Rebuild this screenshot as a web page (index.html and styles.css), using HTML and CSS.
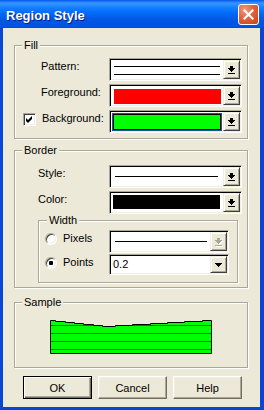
FILE: index.html
```html
<!DOCTYPE html>
<html lang="en">
<head>
  <meta charset="UTF-8">
  <title>Region Style</title>
  <link rel="stylesheet" href="styles.css">
</head>
<body>
  <div class="window">
    <div class="titlebar">
      <span class="title">Region Style</span>
      <button class="close" aria-label="Close">
        <svg width="11" height="11" viewBox="0 0 11 11"><path d="M1.5 1.5L9.5 9.5M9.5 1.5L1.5 9.5" stroke="#fff" stroke-width="2.2" stroke-linecap="square"/></svg>
      </button>
    </div>

    <div class="client">
      <div class="group fill">
        <span class="group-title">Fill</span>
        <div class="row">
          <span class="label">Pattern:</span>
          <div class="combo">
            <div class="combo-value"><div class="pattern-lines"></div></div>
            <span class="drop"><svg width="7" height="8" viewBox="0 0 7 8"><path d="M2 0h3v2h2v1h-1v1h-1v1h-1v1h-1v-1h-1v-1h-1v-1h-1v-1h2zM0 7h7v1H0z"/></svg></span>
          </div>
        </div>
        <div class="row">
          <span class="label">Foreground:</span>
          <div class="combo">
            <div class="combo-value"><div class="swatch red"></div></div>
            <span class="drop"><svg width="7" height="8" viewBox="0 0 7 8"><path d="M2 0h3v2h2v1h-1v1h-1v1h-1v1h-1v-1h-1v-1h-1v-1h-1v-1h2zM0 7h7v1H0z"/></svg></span>
          </div>
        </div>
        <div class="row">
          <span class="label check">
            <span class="checkbox"><svg width="7" height="7" viewBox="0 0 7 7"><polygon points="0,2 2,4 6,0 6,3 2,7 0,5"/></svg></span>
            <span>Background:</span>
          </span>
          <div class="combo">
            <div class="combo-value"><div class="swatch green focus"></div></div>
            <span class="drop"><svg width="7" height="8" viewBox="0 0 7 8"><path d="M2 0h3v2h2v1h-1v1h-1v1h-1v1h-1v-1h-1v-1h-1v-1h-1v-1h2zM0 7h7v1H0z"/></svg></span>
          </div>
        </div>
      </div>

      <div class="group border-group">
        <span class="group-title">Border</span>
        <div class="row">
          <span class="label">Style:</span>
          <div class="combo">
            <div class="combo-value"><div class="line"></div></div>
            <span class="drop"><svg width="7" height="8" viewBox="0 0 7 8"><path d="M2 0h3v2h2v1h-1v1h-1v1h-1v1h-1v-1h-1v-1h-1v-1h-1v-1h2zM0 7h7v1H0z"/></svg></span>
          </div>
        </div>
        <div class="row">
          <span class="label">Color:</span>
          <div class="combo">
            <div class="combo-value"><div class="swatch black"></div></div>
            <span class="drop"><svg width="7" height="8" viewBox="0 0 7 8"><path d="M2 0h3v2h2v1h-1v1h-1v1h-1v1h-1v-1h-1v-1h-1v-1h-1v-1h2zM0 7h7v1H0z"/></svg></span>
          </div>
        </div>

        <div class="group width-group">
          <span class="group-title">Width</span>
          <div class="row">
            <span class="label radio-label"><span class="radio"></span><span>Pixels</span></span>
            <div class="combo narrow">
              <div class="combo-value"><div class="line short"></div></div>
              <span class="drop disabled"><svg width="8" height="9" viewBox="0 0 8 9"><path fill="#fff" d="M3 1h3v2h2v1h-1v1h-1v1h-1v1h-1v-1h-1v-1h-1v-1h-1v-1h2zM1 8h7v1H1z"/><path fill="#aca899" d="M2 0h3v2h2v1h-1v1h-1v1h-1v1h-1v-1h-1v-1h-1v-1h-1v-1h2zM0 7h7v1H0z"/></svg></span>
            </div>
          </div>
          <div class="row points">
            <span class="label radio-label"><span class="radio checked"></span><span>Points</span></span>
            <div class="combo narrow short-combo">
              <div class="combo-value text-value">0.2</div>
              <span class="drop"><svg width="7" height="4" viewBox="0 0 7 4"><path d="M0 0h7v1h-1v1h-1v1h-1v1h-1v-1h-1v-1h-1v-1h-1z"/></svg></span>
            </div>
          </div>
        </div>
      </div>

      <div class="group sample">
        <span class="group-title">Sample</span>
        <svg width="162" height="34" viewBox="0 0 162 34">
          <defs>
            <pattern id="hatch" width="8" height="8" patternUnits="userSpaceOnUse">
              <rect width="8" height="8" fill="#00ff00"/>
              <rect y="5" width="8" height="1" fill="#ff0000"/>
            </pattern>
          </defs>
          <polygon fill="url(#hatch)" stroke="#000" points="0.5,0.5 5.5,0.5 5.5,1.5 15.5,1.5 15.5,2.5 24.5,2.5 24.5,3.5 33.5,3.5 33.5,4.5 43.5,4.5 43.5,5.5 52.5,5.5 52.5,6.5 65.5,6.5 65.5,5.5 82.5,5.5 82.5,4.5 100.5,4.5 100.5,3.5 117.5,3.5 117.5,2.5 134.5,2.5 134.5,1.5 152.5,1.5 152.5,0.5 161.5,0.5 161.5,33.5 0.5,33.5"/>
        </svg>
      </div>

      <div class="buttons">
        <button class="btn default">OK</button>
        <button class="btn">Cancel</button>
        <button class="btn">Help</button>
      </div>
    </div>
  </div>
</body>
</html>
```

FILE: styles.css
```css
html, body {
  margin: 0;
  padding: 0;
}
body {
  width: 264px;
  height: 410px;
  overflow: hidden;
  font-family: "Liberation Sans", Arial, sans-serif;
  font-size: 11px;
  color: #000;
}
.window {
  width: 264px;
  height: 410px;
  display: flex;
  flex-direction: column;
  background: #0846d8;
}
.titlebar {
  height: 28px;
  flex: none;
  display: flex;
  align-items: center;
  justify-content: space-between;
  padding: 0 5px 0 6px;
  background: linear-gradient(180deg, #0058ee 0, #3a93ff 3px, #288eff 5px, #127dff 8px, #036ffc 12px, #0262ee 16px, #0057e5 20px, #0054e3 24px, #0055eb 26px, #0048d8 28px);
}
.title {
  color: #fff;
  font-weight: bold;
  font-size: 13px;
  padding-top: 2px;
  text-shadow: 1px 1px 0 #0a1883;
}
.close {
  width: 21px;
  height: 21px;
  padding: 0;
  margin: 0;
  border: 1px solid #fff;
  border-radius: 3px;
  background: radial-gradient(circle at 30% 25%, #f29a7c 0, #e0623c 45%, #c8421a 100%);
  display: flex;
  align-items: center;
  justify-content: center;
}
.client {
  flex: 1;
  box-sizing: border-box;
  background: #ece9d8;
  border: solid #0846d8;
  border-width: 0 4px 3px 3px;
  padding: 17px 0 0 11px;
}

.group {
  position: relative;
  width: 234px;
  box-sizing: border-box;
  border: 1px solid #aca899;
  box-shadow: inset 1px 1px 0 #fff, 1px 1px 0 #fff;
}
.group-title {
  position: absolute;
  top: -7px;
  left: 7px;
  padding: 0 2px;
  line-height: 13px;
  background: #ece9d8;
}
.fill {
  padding: 12px 5px 5px 0;
}
.border-group {
  margin-top: 11px;
  padding: 14px 5px 4px 0;
}
.width-group {
  width: 200px;
  margin: 6px 0 0 23px;
  padding: 9px 8px 7px 0;
}
.width-group .group-title {
  left: 8px;
}
.sample {
  margin-top: 14px;
  padding: 17px 0 13px;
  display: flex;
  justify-content: center;
}

.row {
  display: flex;
  align-items: flex-start;
  height: 23px;
}
.row + .row {
  margin-top: 3px;
}
.row.points {
  height: 21px;
  margin-top: 1px;
}
.label {
  width: 94px;
  flex: none;
  box-sizing: border-box;
  padding: 2px 0 0 26px;
  line-height: 13px;
  white-space: nowrap;
}
.border-group .label {
  padding-left: 23px;
}
.label.check {
  display: flex;
  gap: 6px;
  padding-left: 8px;
}
.width-group .label.radio-label {
  width: 70px;
  display: flex;
  gap: 6px;
  padding-left: 6px;
}

.checkbox {
  width: 13px;
  height: 13px;
  margin-top: 1px;
  flex: none;
  box-sizing: border-box;
  background: #fff;
  border: 1px solid;
  border-color: #aca899 #fff #fff #aca899;
  box-shadow: inset 1px 1px 0 #404040, inset -1px -1px 0 #f1efe2;
  display: flex;
  align-items: center;
  justify-content: center;
}
.radio {
  width: 12px;
  height: 12px;
  margin-top: 1px;
  flex: none;
  box-sizing: border-box;
  border-radius: 50%;
  background: #fff;
  border: 1px solid;
  border-color: #aca899 #fff #fff #aca899;
  box-shadow: inset 1px 1px 0 #404040, inset -1px -1px 0 #f1efe2;
  display: flex;
  align-items: center;
  justify-content: center;
}
.radio.checked::after {
  content: "";
  width: 4px;
  height: 4px;
  border-radius: 1px;
  background: #000;
}

.combo {
  width: 133px;
  height: 23px;
  flex: none;
  box-sizing: border-box;
  display: flex;
  padding: 1px;
  background: #fff;
  border: 1px solid;
  border-color: #aca899 #fff #fff #aca899;
  box-shadow: inset 1px 1px 0 #000, inset -1px -1px 0 #f1efe2;
}
.combo.narrow {
  width: 120px;
}
.combo.short-combo {
  height: 21px;
}
.combo-value {
  flex: 1;
  min-width: 0;
  display: flex;
  flex-direction: column;
}
.text-value {
  justify-content: center;
  padding-left: 2px;
  line-height: 13px;
}
.drop {
  width: 17px;
  flex: none;
  box-sizing: border-box;
  background: #ece9d8;
  border: 1px solid;
  border-color: #f1efe2 #404040 #404040 #f1efe2;
  box-shadow: inset 1px 1px 0 #fff, inset -1px -1px 0 #aca899;
  display: flex;
  align-items: center;
  justify-content: center;
}
.drop.disabled svg {
  margin: 1px 0 0 1px;
}

.pattern-lines {
  margin: 6px 3px 0 3px;
  height: 7px;
  border-top: 1px solid #000;
  border-bottom: 1px solid #000;
}
.line {
  height: 1px;
  margin: auto 5px auto 4px;
  background: #000;
}
.line.short {
  margin-right: 3px;
}
.swatch {
  flex: 1;
  margin: 3px 2px 1px 3px;
}
.swatch.red {
  background: #ff0000;
}
.swatch.black {
  margin: 2px 3px 3px 2px;
  background: #000;
}
.swatch.green {
  background: #00ff00;
}
.swatch.focus {
  margin: 1px 1px 0 1px;
  border: 1px solid #1f4fa8;
  box-shadow: inset 0 0 0 1px #000;
}

.buttons {
  display: flex;
  gap: 6px;
  margin-top: 8px;
  padding-left: 9px;
}
.btn {
  width: 69px;
  height: 23px;
  padding: 0;
  font-family: "Liberation Sans", Arial, sans-serif;
  font-size: 11px;
  color: #000;
  background: #ece9d8;
  border: 1px solid;
  border-color: #fff #716f64 #716f64 #fff;
  box-shadow: inset -1px -1px 0 #aca899, inset 1px 1px 0 #f1efe2;
}
.btn.default {
  border-color: #000;
  box-shadow: inset 1px 1px 0 #fff, inset -1px -1px 0 #716f64, inset -2px -2px 0 #aca899;
}
```
